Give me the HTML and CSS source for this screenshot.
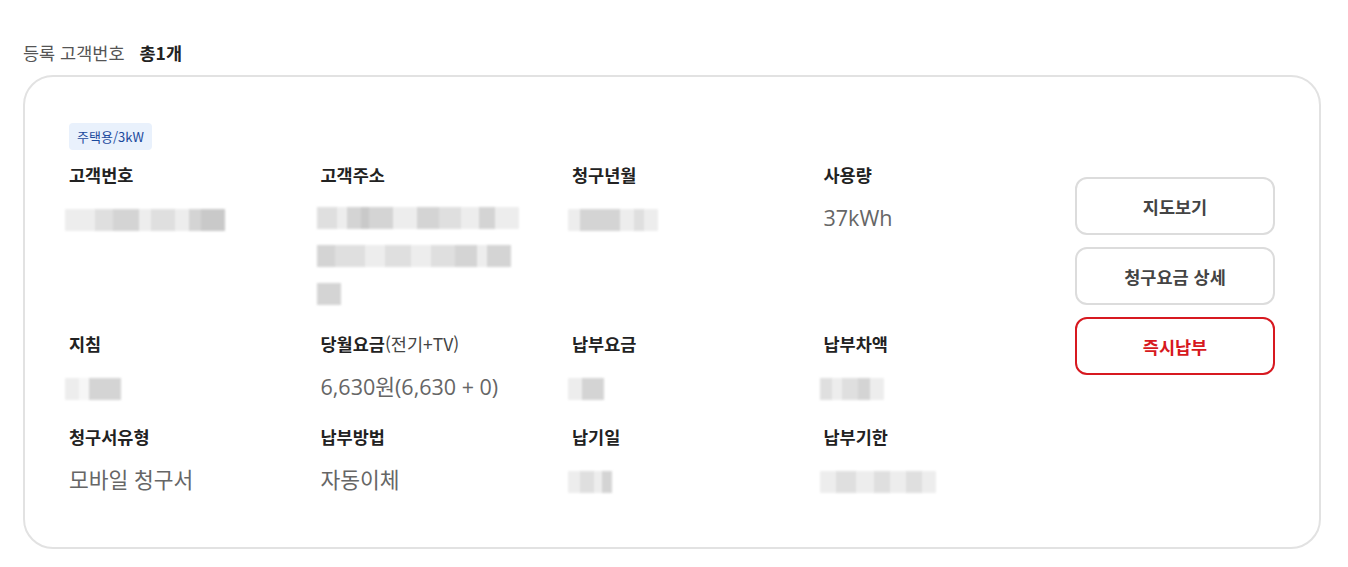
FILE: index.html
```html
<!DOCTYPE html>
<html lang="ko">
<head>
<meta charset="utf-8">
<title>등록 고객번호</title>
<link rel="stylesheet" href="styles.css">
</head>
<body>
<div class="wrap">
  <div class="head"><span class="head-label">등록 고객번호</span><span class="head-count">총1개</span></div>
  <div class="card">
    <div class="main">
      <span class="badge">주택용/3kW</span>
      <div class="grid">
        <div class="item">
          <div class="label">고객번호</div>
          <div class="value"><span class="mask"><i class="m1" style="width:30px"></i><i class="m2" style="width:18px"></i><i class="m3" style="width:26px"></i><i class="m1" style="width:12px"></i><i class="m2" style="width:24px"></i><i class="m1" style="width:14px"></i><i class="m3" style="width:12px"></i><i class="m4" style="width:24px"></i></span></div>
        </div>
        <div class="item">
          <div class="label">고객주소</div>
          <div class="value">
            <div class="mline"><span class="mask"><i class="m2" style="width:20px"></i><i class="m1" style="width:10px"></i><i class="m3" style="width:14px"></i><i class="m4" style="width:8px"></i><i class="m3" style="width:24px"></i><i class="m1" style="width:24px"></i><i class="m3" style="width:22px"></i><i class="m2" style="width:22px"></i><i class="m1" style="width:18px"></i><i class="m3" style="width:16px"></i><i class="m1" style="width:24px"></i></span></div>
            <div class="mline"><span class="mask"><i class="m3" style="width:18px"></i><i class="m2" style="width:30px"></i><i class="m1" style="width:20px"></i><i class="m2" style="width:26px"></i><i class="m1" style="width:20px"></i><i class="m2" style="width:24px"></i><i class="m3" style="width:22px"></i><i class="m1" style="width:10px"></i><i class="m3" style="width:24px"></i></span></div>
            <div class="mline"><span class="mask"><i class="m3" style="width:24px"></i></span></div>
          </div>
        </div>
        <div class="item">
          <div class="label">청구년월</div>
          <div class="value"><span class="mask"><i class="m1" style="width:12px"></i><i class="m3" style="width:40px"></i><i class="m1" style="width:14px"></i><i class="m2" style="width:10px"></i><i class="m1" style="width:14px"></i></span></div>
        </div>
        <div class="item">
          <div class="label">사용량</div>
          <div class="value">37kWh</div>
        </div>

        <div class="item">
          <div class="label">지침</div>
          <div class="value"><span class="mask"><i class="m1" style="width:14px"></i><i class="m4w" style="width:10px"></i><i class="m3" style="width:32px"></i></span></div>
        </div>
        <div class="item">
          <div class="label">당월요금<span class="sub">(전기+TV)</span></div>
          <div class="value">6,630원(6,630 + 0)</div>
        </div>
        <div class="item">
          <div class="label">납부요금</div>
          <div class="value"><span class="mask"><i class="m1" style="width:14px"></i><i class="m3" style="width:22px"></i></span></div>
        </div>
        <div class="item">
          <div class="label">납부차액</div>
          <div class="value"><span class="mask"><i class="m2" style="width:12px"></i><i class="m1" style="width:10px"></i><i class="m2" style="width:16px"></i><i class="m3" style="width:12px"></i><i class="m1" style="width:14px"></i></span></div>
        </div>

        <div class="item">
          <div class="label">청구서유형</div>
          <div class="value">모바일 청구서</div>
        </div>
        <div class="item">
          <div class="label">납부방법</div>
          <div class="value">자동이체</div>
        </div>
        <div class="item">
          <div class="label">납기일</div>
          <div class="value"><span class="mask"><i class="m1" style="width:12px"></i><i class="m2" style="width:14px"></i><i class="m1" style="width:8px"></i><i class="m3" style="width:10px"></i></span></div>
        </div>
        <div class="item">
          <div class="label">납부기한</div>
          <div class="value"><span class="mask"><i class="m1" style="width:16px"></i><i class="m2" style="width:20px"></i><i class="m1" style="width:18px"></i><i class="m2" style="width:16px"></i><i class="m1" style="width:16px"></i><i class="m2" style="width:16px"></i><i class="m1" style="width:14px"></i></span></div>
        </div>
      </div>
    </div>
    <div class="actions">
      <button class="btn" type="button">지도보기</button>
      <button class="btn" type="button">청구요금 상세</button>
      <button class="btn btn-red" type="button">즉시납부</button>
    </div>
  </div>
</div>
</body>
</html>
```

FILE: styles.css
```css
* { box-sizing: border-box; }
html, body { margin: 0; padding: 0; background: #fff; }
body {
  font-family: "Noto Sans CJK KR", "Noto Sans", sans-serif;
  color: #222;
}
.wrap {
  width: 1298px;
  margin-left: 23px;
  padding-top: 40px;
}
.head {
  display: flex;
  align-items: center;
  gap: 15px;
  height: 26px;
  font-size: 17.5px;
  line-height: 26px;
}
.head-label { color: #555; }
.head-count { color: #222; font-weight: 700; }
.card {
  margin-top: 9px;
  border: 2px solid #e2e2e2;
  border-radius: 30px;
  padding: 46px 44px 44px 44px;
  display: flex;
  min-height: 474px;
}
.main { flex: 1; min-width: 0; }
.badge {
  display: inline-block;
  height: 27px;
  line-height: 27px;
  padding: 0 8px;
  background: #e9f1fc;
  color: #1b4a9c;
  font-size: 13px;
  border-radius: 4px;
}
.grid {
  margin-top: 14px;
  display: grid;
  grid-template-columns: repeat(4, 1fr);
  row-gap: 20px;
}
.label {
  font-size: 17.5px;
  font-weight: 700;
  line-height: 22px;
  color: #222;
}
.sub {
  font-weight: 400;
  color: #444;
}
.value {
  margin-top: 13px;
  font-family: "Open Sans", "Noto Sans CJK KR", sans-serif;
  font-size: 21.5px;
  line-height: 38px;
  color: #666;
  font-weight: 400;
}
.mline { height: 38px; display: flex; align-items: center; }
.mask {
  display: inline-flex;
  vertical-align: middle;
  height: 22px;
  margin-left: -4px;
  filter: blur(1.2px);
  opacity: 0.9;
}
.mask i { display: block; height: 22px; }
.m1 { background: #ececec; }
.m2 { background: #dcdcdc; }
.m3 { background: #d0d0d0; }
.m4 { background: #c4c4c4; }
.m4w { background: #f6f6f6; }
.actions {
  width: 200px;
  flex: none;
  padding-top: 54px;
  display: flex;
  flex-direction: column;
  gap: 12px;
}
.btn {
  height: 58px;
  width: 200px;
  border: 2px solid #dcdcdc;
  border-radius: 12px;
  background: #fff;
  font-family: "Noto Sans CJK KR", "Noto Sans", sans-serif;
  font-size: 17.5px;
  font-weight: 700;
  color: #444;
  cursor: pointer;
}
.btn-red {
  border-color: #d71920;
  color: #d71920;
}
```
